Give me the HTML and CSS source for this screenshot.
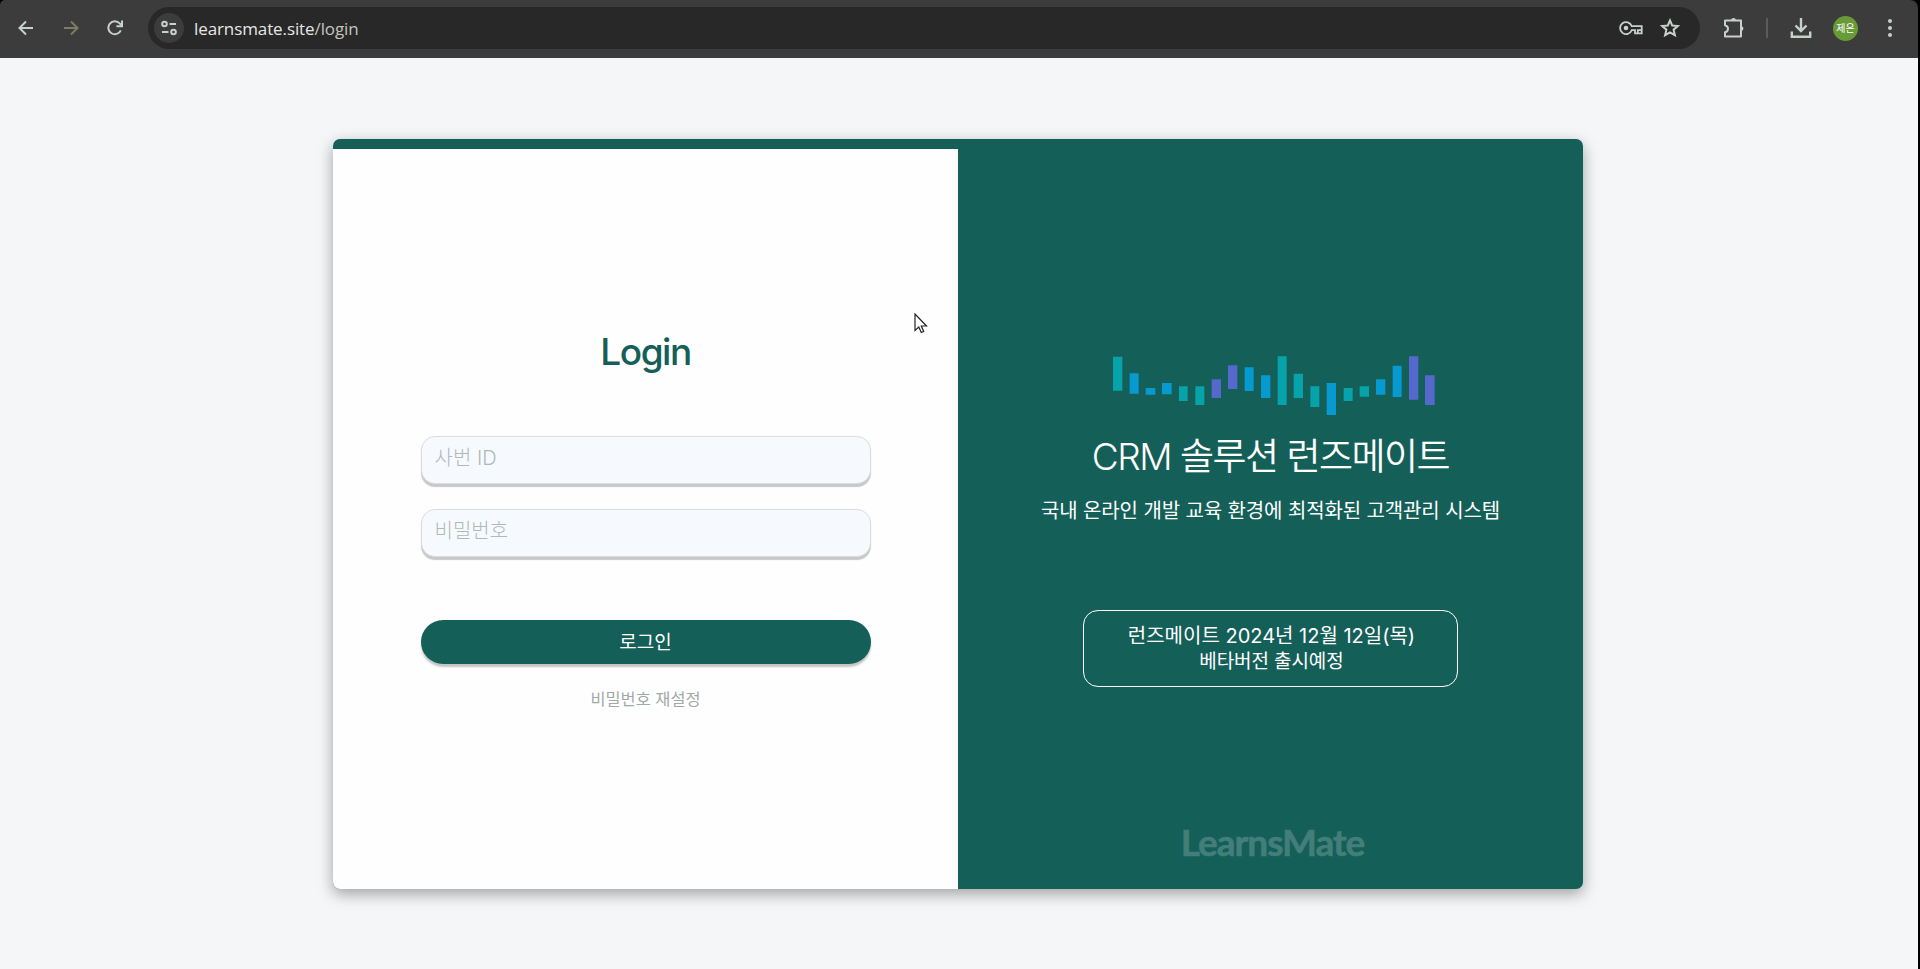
FILE: index.html
```html
<!DOCTYPE html>
<html lang="ko">
<head>
<meta charset="utf-8">
<title>LearnsMate</title>
<link rel="stylesheet" href="styles.css">
</head>
<body>
<div class="window">
  <header class="toolbar">
    <nav class="nav">
      <svg class="ic back" width="16" height="16" viewBox="0 0 16 16"><path d="M15 8H2M8 1.5L1.5 8L8 14.5"/></svg>
      <svg class="ic forward" width="16" height="16" viewBox="0 0 16 16"><path d="M1 8h13M8 1.5L14.500 8L8 14.500"/></svg>
      <svg class="ic reload" width="16" height="16" viewBox="0 0 16 16"><path d="M13.800 10.300A6.500 6.500 0 1 1 12.700 3.400L14.700 5.500"/><path d="M15 .6V6.200H9.400"/></svg>
    </nav>
    <div class="address">
      <span class="site-info"><svg class="ic" width="16" height="16" viewBox="0 0 16 16"><circle cx="3.500" cy="4" r="2.300"/><path d="M8.500 4H15M1 12H7.500"/><circle cx="12.500" cy="12" r="2.300"/></svg></span>
      <span class="url">learnsmate.site<span class="path">/login</span></span>
      <svg class="ic key" width="24" height="14" viewBox="0 0 24 14"><path d="M12.700 5A6 6 0 1 0 12.700 9.200H16V12.300H22.700V5.200Z"/><circle cx="7" cy="7" r="2.300" fill="currentColor" stroke="none"/><path d="M18.800 12V9.200H22"/></svg>
      <svg class="ic" width="20" height="20" viewBox="0 0 20 20"><path d="M10 2.400L12.200 7.500L17.800 8L13.600 11.700L14.900 17.200L10 14.300L5.100 17.200L6.400 11.700L2.200 8L7.800 7.500Z"/></svg>
    </div>
    <svg class="ic puzzle" width="22" height="22" viewBox="0 0 22 22"><path d="M2 3.500H18V19.500H2V15.300Q5 14.500 5 11.700Q5 9 2 8.200Z" stroke-linejoin="round"/><path d="M8 3.500a2.500 2.500 0 0 1 5 0zM18 9a2.500 2.500 0 0 1 0 5z" fill="currentColor" stroke="none"/></svg>
    <span class="divider"></span>
    <svg class="ic download" width="22" height="22" viewBox="0 0 22 22"><path d="M11 1V13.500M5.500 8.500L11 14L16.500 8.500M1.800 14.500V19.800H20.200V14.500"/></svg>
    <span class="avatar">제은</span>
    <svg class="dots" width="6" height="20" viewBox="0 0 6 20"><circle cx="3" cy="3" r="2"/><circle cx="3" cy="10" r="2"/><circle cx="3" cy="17" r="2"/></svg>
  </header>
  <main class="page">
    <div class="card">
      <section class="login">
        <h1 class="title">Login</h1>
        <input class="field" type="text" placeholder="사번 ID">
        <input class="field" type="password" placeholder="비밀번호">
        <button class="submit">로그인</button>
        <a class="reset">비밀번호 재설정</a>
      </section>
      <section class="intro">
        <svg class="bars" width="322" height="59" viewBox="100 48 966 177">
          <g fill="#07a3ab"><path d="M100 50h28v102h-28zM298 139h26v44h-26zM347 139h27v56h-27zM594 49h27v146h-27zM642 101h28v73h-28zM692 139h27v62h-27zM792 144h27v39h-27zM840 139h28v31h-28z"/></g>
          <g fill="#069ad0"><path d="M150 100h27v61h-27zM198 144h29v20h-29zM247 129h29v34h-29zM495 82h27v71h-27zM544 106h28v68h-28zM741 129h28v96h-28zM889 118h28v46h-28zM939 77h27v94h-27z"/></g>
          <g fill="#5568cc"><path d="M396 118h28v56h-28zM445 76h28v71h-28zM988 49h28v130h-28zM1036 106h29v89h-29z"/></g>
        </svg>
        <h2 class="headline">CRM 솔루션 런즈메이트</h2>
        <p class="sub">국내 온라인 개발 교육 환경에 최적화된 고객관리 시스템</p>
        <div class="notice"><span class="date">런즈메이트 2024년 12월 12일(목)</span><span class="release">베타버전 출시예정</span></div>
        <div class="brand">LearnsMate</div>
      </section>
    </div>
    <svg class="cursor" width="14" height="21" viewBox="0 0 14 21"><path d="M1 1V17.500L4.800 14L7.300 19.500L9.700 18.500L7.300 13H12.500Z"/></svg>
  </main>
</div>
</body>
</html>
```

FILE: styles.css
```css
* { box-sizing: border-box; }
html { height: 969px; overflow: hidden; }
body {
  margin: 0;
  background: #000;
  font-family: Inter, "Noto Sans CJK KR", sans-serif;
}
.window { width: 1918px; height: 969px; display: flex; flex-direction: column; overflow: hidden; }

.toolbar {
  height: 58px;
  flex: none;
  display: flex;
  align-items: center;
  padding: 0 25px 2px 18px;
  background: #3c3c3c;
  border-radius: 5px 8px 0 0;
  color: #c7d0ca;
}
.nav { display: flex; gap: 28.5px; width: 130px; }
.ic { fill: none; stroke: currentColor; stroke-width: 2; flex: none; display: block; }
.forward { color: #7d7d64; }
.address {
  width: 1552px;
  height: 42px;
  border-radius: 21px;
  background: #282828;
  display: flex;
  align-items: center;
  padding: 0 20px 0 6px;
}
.site-info {
  width: 30px;
  height: 30px;
  border-radius: 50%;
  background: #3c3c3c;
  display: flex;
  align-items: center;
  justify-content: center;
}
.url { flex: 1; margin-left: 10px; padding-top: 1px; font: 17px/24px "Open Sans", sans-serif; color: #e6e6e6; letter-spacing: -0.1px; }
.path { color: #c4c4bc; }
.key { margin-right: 17px; stroke-width: 1.8; }
.puzzle { margin-left: 23px; }
.divider { width: 2px; height: 20px; background: #5c5c57; margin-left: 21px; }
.download { margin-left: 22px; stroke-width: 2.4; }
.avatar {
  width: 25px;
  height: 25px;
  margin-left: 21px;
  border-radius: 50%;
  background: #689a38;
  color: #fff;
  font-size: 10px;
  line-height: 25px;
  text-align: center;
}
.dots { fill: currentColor; margin-left: auto; }

.page {
  position: relative;
  flex: 1;
  background: #f4f6f8;
  padding: 81px 0 0 333px;
}
.card {
  width: 1250px;
  height: 750px;
  display: flex;
  border-radius: 7px;
  overflow: hidden;
  background: #155f59;
  box-shadow: 0 5px 15px rgba(0, 0, 0, 0.35);
}
.login {
  width: 625px;
  margin-top: 10px;
  background: #fefefe;
  display: flex;
  flex-direction: column;
  align-items: center;
}
.title {
  margin: 181px 0 62px;
  height: 44px;
  font-size: 37px;
  line-height: 44px;
  font-weight: 450;
  letter-spacing: -1.5px;
  color: #155f59;
}
.field {
  width: 450px;
  height: 48px;
  margin: 0 0 25px;
  padding: 0 13px 4px;
  border: 1px solid #dcdcdc;
  border-radius: 14px;
  background: #f6f9fe;
  box-shadow: 0 3px 1px #c8c8c8;
  font: 300 20px "Inter", "Noto Sans CJK KR", sans-serif;
}
.field::placeholder { color: #b0b9b5; opacity: 1; }
.submit {
  width: 450px;
  height: 44px;
  margin-top: 38px;
  padding: 0 0 3px;
  border: 0;
  border-radius: 22px;
  background: #155f59;
  box-shadow: 0 3px 2px #c4c4c4;
  color: #fff;
  font: 19px "Inter", "Noto Sans CJK KR", sans-serif;
}
.reset { margin-top: 23px; font-size: 16.400px; line-height: 24px; color: #a1aaa6; }

.intro { width: 625px; display: flex; flex-direction: column; align-items: center; color: #fff; }
.bars { margin: 217px 0 0 7px; flex: none; }
.headline { margin: 17px 0 0; font-size: 37px; line-height: 50px; font-weight: 350; letter-spacing: -1.5px; white-space: nowrap; }
.sub { margin: 14px 0 0; font-size: 20px; line-height: 30px; letter-spacing: -0.120px; white-space: nowrap; }
.notice {
  width: 375px;
  height: 77px;
  margin-top: 84px;
  padding-left: 2px;
  border: 1px solid #fff;
  border-radius: 15px;
  display: flex;
  flex-direction: column;
  align-items: center;
  justify-content: center;
  font-size: 20px;
  line-height: 25px;
}
.release { font-size: 19px; letter-spacing: -0.1px; }
.brand {
  margin: 135px 0 0 4px;
  font: 700 37px/40px Lato, sans-serif;
  letter-spacing: -1px;
  -webkit-text-stroke: 0.6px #437e79;
  color: #437e79;
}
.cursor { position: absolute; left: 914px; top: 255px; fill: #fff; stroke: #222; stroke-width: 1.2; }
```
